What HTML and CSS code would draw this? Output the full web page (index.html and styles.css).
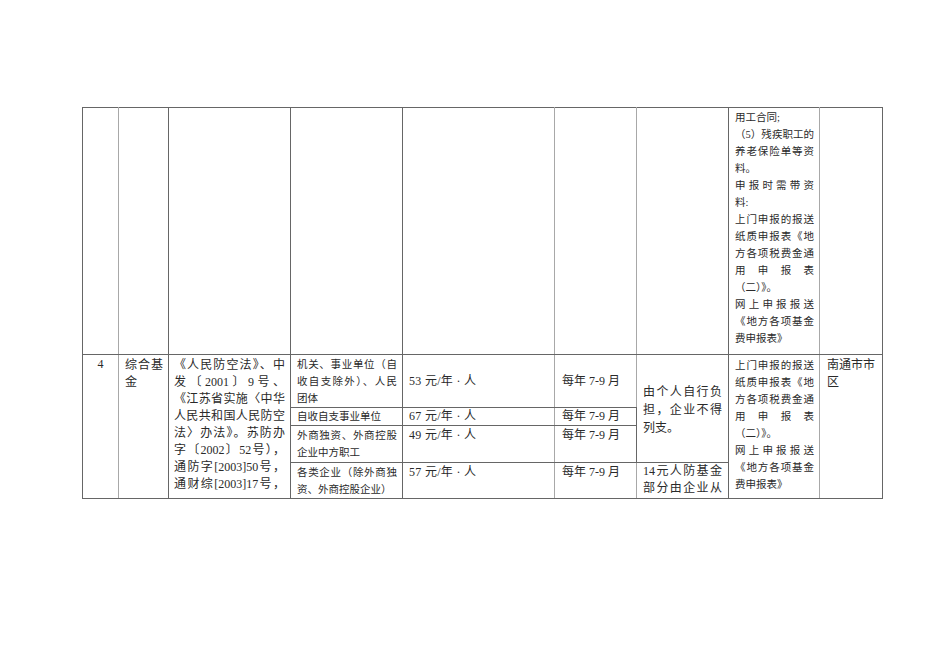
FILE: index.html
```html
<!DOCTYPE html>
<html lang="zh-CN">
<head>
<meta charset="utf-8">
<title>综合基金</title>
<link rel="stylesheet" href="styles.css">
</head>
<body>
<div class="page">
<table class="grid">
<colgroup>
<col class="w1"><col class="w2"><col class="w3"><col class="w4"><col class="w5"><col class="w6"><col class="w7"><col class="w8"><col class="w9">
</colgroup>
<tr class="r1">
<td class="lr"></td>
<td></td>
<td></td>
<td></td>
<td class="lr"></td>
<td class="lr"></td>
<td></td>
<td class="doc doc1 lr">
<div>用工合同;</div>
<div class="j">（5）残疾职工的</div>
<div class="j">养老保险单等资</div>
<div>料。</div>
<div class="j">申报时需带资</div>
<div>料:</div>
<div class="j">上门申报的报送</div>
<div class="j">纸质申报表《地</div>
<div class="j">方各项税费金通</div>
<div class="j">用申报表</div>
<div>（二）》。</div>
<div class="j">网上申报报送</div>
<div class="j">《地方各项基金</div>
<div>费申报表》</div>
</td>
<td></td>
</tr>
<tr class="r2a">
<td rowspan="4" class="num lr">4</td>
<td rowspan="4" class="name"><div class="j">综合基</div><div>金</div></td>
<td rowspan="4" class="law">
<div class="j">《人民防空法》、中</div>
<div class="j">发〔2001〕9号、</div>
<div class="j">《江苏省实施〈中华</div>
<div class="j">人民共和国人民防空</div>
<div class="j">法〉办法》。苏防办</div>
<div class="j">字〔2002〕52号），</div>
<div class="j">通防字[2003]50号，</div>
<div class="j">通财综[2003]17号，</div>
</td>
<td class="unit">
<div class="j">机关、事业单位（自</div>
<div class="j">收自支除外）、人民</div>
<div>团体</div>
</td>
<td class="fee mid lr">53 元/年 · 人</td>
<td class="time mid lr">每年 7-9 月</td>
<td rowspan="3" class="bear mid">
<div class="j">由个人自行负</div>
<div class="j">担，企业不得</div>
<div>列支。</div>
</td>
<td rowspan="4" class="doc doc2 lr">
<div class="j">上门申报的报送</div>
<div class="j">纸质申报表《地</div>
<div class="j">方各项税费金通</div>
<div class="j">用申报表</div>
<div>（二）》。</div>
<div class="j">网上申报报送</div>
<div class="j">《地方各项基金</div>
<div>费申报表》</div>
</td>
<td rowspan="4" class="area"><div>南通市市</div><div>区</div></td>
</tr>
<tr class="r2b">
<td class="unit">自收自支事业单位</td>
<td class="fee mid lr">67 元/年 · 人</td>
<td class="time mid lr">每年 7-9 月</td>
</tr>
<tr class="r2c">
<td class="unit">
<div class="j">外商独资、外商控股</div>
<div>企业中方职工</div>
</td>
<td class="fee lr">49 元/年 · 人</td>
<td class="time lr">每年 7-9 月</td>
</tr>
<tr class="r2d">
<td class="unit">
<div class="j">各类企业（除外商独</div>
<div>资、外商控股企业）</div>
</td>
<td class="fee lr">57 元/年 · 人</td>
<td class="time lr">每年 7-9 月</td>
<td class="bear">
<div class="j">14元人防基金</div>
<div class="j">部分由企业从</div>
</td>
</tr>
</table>
</div>
</body>
</html>
```
FILE: styles.css
```css
html, body {
  margin: 0;
  padding: 0;
  background: #ffffff;
}

body {
  font-family: "Liberation Serif", "Noto Sans CJK SC", serif;
  color: #2a2a2a;
}

.page {
  padding: 107px 0 0 82px;
}

.grid {
  border-collapse: collapse;
  table-layout: fixed;
  width: 800px;
}

.w1 { width: 36px; }
.w2 { width: 50px; }
.w3 { width: 122px; }
.w4 { width: 112px; }
.w5 { width: 152px; }
.w6 { width: 82px; }
.w7 { width: 92px; }
.w8 { width: 91px; }
.w9 { width: 63px; }

.grid td {
  border: 1px solid #666666;
  padding: 1px 5px 0 5px;
  vertical-align: top;
  font-size: 12px;
  line-height: 17px;
  overflow: hidden;
}

.grid td.lr {
  border-right-color: #a8a8a8;
}

.r1 { height: 247px; }
.r2a { height: 53px; }
.r2b { height: 18px; }
.r2c { height: 37px; }
.r2d { height: 35px; }

.r2b td, .r2c td, .r2d td {
  border-top-color: #858585;
}

.grid td.mid {
  vertical-align: middle;
  padding-top: 0;
}

.j {
  text-align: justify;
  text-align-last: justify;
}

.num {
  text-align: center;
  padding-top: 2px;
}

.grid td.name {
  padding: 2px 5px 0 6px;
}

.grid td.law {
  padding: 2px 5px 0 5px;
}

.grid td.unit {
  font-size: 10.5px;
  padding: 1px 5px 0 6px;
}

.r2b td.unit {
  padding-top: 0;
}

.grid td.fee {
  padding-left: 6px;
  letter-spacing: 0.3px;
}

.grid td.time {
  padding-left: 7px;
}

.grid td.bear {
  font-size: 12px;
  line-height: 18px;
  padding: 3px 6px 0 6px;
}

.r2d td.bear {
  padding-top: 0;
  line-height: 17px;
}

.grid td.doc {
  font-size: 10.5px;
  padding: 1px 5px 0 6px;
}

.doc1 {
  line-height: 17.6px;
}

.grid td.doc2 {
  padding-top: 2px;
}

.grid td.area {
  padding: 2px 2px 0 7px;
  white-space: nowrap;
}
```
